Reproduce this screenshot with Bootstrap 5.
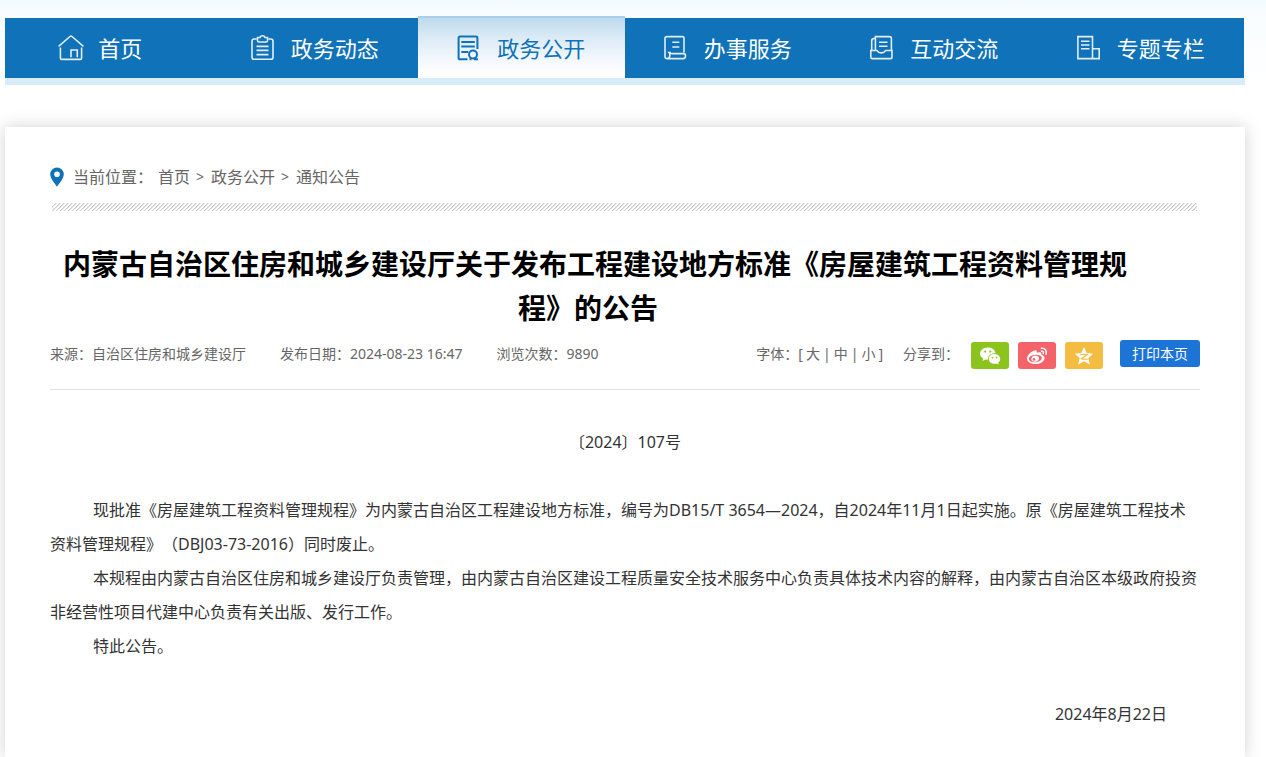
<!DOCTYPE html>
<html lang="zh-CN">
<head>
<meta charset="utf-8">
<meta name="viewport" content="width=device-width, initial-scale=1">
<title>通知公告</title>
<link href="https://cdn.jsdelivr.net/npm/bootstrap@5.3.0/dist/css/bootstrap.min.css" rel="stylesheet">
<style>
body{font-family:"Noto Sans","Noto Sans CJK SC",sans-serif;font-size:16px;color:#333;text-spacing-trim:space-all;background:#fff linear-gradient(#f4fbff,#f9fdff 20px,#fff 85px) no-repeat 0 0/100% 85px}
.page-wrap{padding:18px 21px 0 5px;overflow:hidden}
.main-nav{border-bottom:7px solid #d8ebf9}
.main-nav ul{background:#1072b8;margin-right:1px}
.main-nav a{height:60px;color:#fff;font-size:22px;line-height:32px;gap:14px}
.main-nav a.first-tab{padding-right:16px}
.main-nav a.active{margin-top:-2px;height:62px;padding-top:2px;color:#1072b8;background:linear-gradient(#a8cfec 0,#a8cfec 2px,#bedaed 2px,#dcebf6 22px,#f5f9fd 46px,#fff 58px)}
.main-nav svg{width:26px;height:26px;fill:none;stroke:currentColor;stroke-width:1.6;opacity:.88}
.main-nav a.active svg{stroke-width:2;opacity:1}
.sheet{margin-top:42px;background:#fff;box-shadow:0 0 16px rgba(0,0,0,.18);padding:38px 45px 24px}
.crumbs{line-height:24px;color:#666}
.crumbs a,.meta a{color:inherit;text-decoration:none}
.crumbs svg{margin-right:9px}
.crumbs .sep{font-size:14px;margin:0 7px 0 6px}
.crumbs .here{margin-right:5px}
.hatch{height:8px;margin:14px 3px 0 2px;background:linear-gradient(135deg,#ccc 12%,transparent 13%,transparent 49%,#ccc 50%,#ccc 62%,transparent 63%) 0 0/4px 4px}
h1{font-size:28px;line-height:44px;font-weight:700;color:#000;text-align:center;text-indent:14px;margin:31px 69px 0 -5px}
.meta{font-size:14px;line-height:28px;color:#666;padding:10px 0 20px;border-bottom:1px solid #e2e2e2}
.stats{gap:34px}
.sizes{margin-right:20px}
.sizes a{margin:0 3px}
.share-set{gap:9px;margin-left:12px}
.share{width:38px;height:27px;border:0;border-radius:3px;padding:0;margin-top:2px}
.share svg{width:24px;height:22px;fill:#fff;display:block;margin:auto}
.wx{background:#8bc41c}.wb{background:#f5636a}.qz{background:#f4bc41}
.print-btn{width:80px;height:27px;border:0;border-radius:3px;background:#1b74d6;color:#fff;font-size:14px;line-height:27px;padding:0;margin-left:17px}
.article{line-height:34px;padding-top:35px}
.article p{margin:0}
.article .para{text-indent:43px}
.article .date{padding-right:33px}
</style>
</head>
<body>
<div class="page-wrap d-flex flex-column min-vh-100">
<nav class="main-nav">
<ul class="list-unstyled row g-0 row-cols-6 mb-0">
<li class="col"><a href="#" class="first-tab d-flex align-items-center justify-content-center text-decoration-none"><svg viewBox="0 0 26 26" aria-hidden="true"><path d="M.6 11.4 12 1.5q1-.8 2 0l11.4 9.9M2.4 12.4V23q0 1.4 1.4 1.4h18.4q1.4 0 1.4-1.4V12.4M13 22.200V15h6.300v7.200"/></svg>首页</a></li>
<li class="col"><a href="#" class="d-flex align-items-center justify-content-center text-decoration-none"><svg viewBox="0 0 26 26" aria-hidden="true"><path d="M5.500 4H3.200Q1 4 1 6.200v16Q1 24.300 3.200 24.300h16.600q2.200 0 2.200-2.100v-16Q22 4 19.800 4h-2.300M6.500 2.500H9q.5-1.700 2.500-1.700T14 2.500h2.500v3q0 1.500-1.500 1.500H8q-1.500 0-1.500-1.500zM5.500 11.400h12M5.500 15.400h12M5.500 19.600h12"/></svg>政务动态</a></li>
<li class="col"><a href="#" aria-current="page" class="active d-flex align-items-center justify-content-center text-decoration-none"><svg viewBox="0 0 26 26" aria-hidden="true"><path d="M10.500 24.300H3q-1.400 0-1.400-1.400V3Q1.600 1.600 3 1.600h16q1.400 0 1.400 1.400v11M4.300 7h13.500M4.300 11.400h13.500M4.300 17h7"/><circle cx="16" cy="19.500" r="4"/><path d="M12.500 24.300h2M18 22.800v1.500h3"/></svg>政务公开</a></li>
<li class="col"><a href="#" class="d-flex align-items-center justify-content-center text-decoration-none"><svg viewBox="0 0 26 26" aria-hidden="true"><path d="M20 17.500V3q0-1.400-1.400-1.400H3Q1 1.600 1 3.500v18q0 2.100 2.200 2.100h16q2.300 0 2.300-2.600 0-2.400-1.800-2.400h-12q-1.600 0-1.600-1H5q1.200 1.400.8 3.500-.4 2.400-2.600 2.500M8.300 7.200h7M8.300 12h7"/></svg>办事服务</a></li>
<li class="col"><a href="#" class="d-flex align-items-center justify-content-center text-decoration-none"><svg viewBox="0 0 26 26" aria-hidden="true"><path d="M5.400 15.500V1.600h14q2 0 2 2v12M5.400 3.500H4Q1.700 3.500 1.700 6v9.500M.8 15.500h6q.3 0 .5.400 1 2 4 2t4-2q.2-.4.500-.4h6.200v6.700q0 1.400-1.400 1.400H2.200Q.8 23.600.8 22.200zM9 7.200h8.500M9 11.200h8.500"/></svg>互动交流</a></li>
<li class="col"><a href="#" class="d-flex align-items-center justify-content-center text-decoration-none"><svg viewBox="0 0 26 26" aria-hidden="true"><path d="M15.500 23.600H.9V1.600h14.600zM15.500 13.800h6.700v9.800h-6.700M4 6.200h8.500M4 10h8.500M4 13.800h8.500"/></svg>专题专栏</a></li>
</ul>
</nav>
<main class="sheet flex-grow-1">
<nav class="crumbs d-flex align-items-center" aria-label="当前位置"><svg width="14" height="20" viewBox="0 0 14 20" aria-hidden="true"><path fill="#1072b8" fill-rule="evenodd" d="M7 .5a6.800 6.800 0 0 1 6.800 6.800C13.800 11.500 9.500 16 7 19.800 4.500 16 .2 11.500.2 7.300A6.800 6.800 0 0 1 7 .5zm0 4a2.800 2.800 0 1 0 0 5.600 2.800 2.800 0 0 0 0-5.600z"/></svg><span class="here">当前位置：</span><a href="#">首页</a><span class="sep">&gt;</span><a href="#">政务公开</a><span class="sep">&gt;</span><a href="#">通知公告</a></nav>
<div class="hatch"></div>
<h1>内蒙古自治区住房和城乡建设厅关于发布工程建设地方标准《房屋建筑工程资料管理规程》的公告</h1>
<div class="meta d-flex justify-content-between">
<div class="stats d-flex"><span>来源：自治区住房和城乡建设厅</span><span>发布日期：2024-08-23 16:47</span><span>浏览次数：9890</span></div>
<div class="d-flex"><span class="sizes">字体：[<a href="#">大</a>|<a href="#">中</a>|<a href="#">小</a>]</span><span>分享到：</span>
<div class="d-flex share-set">
<button type="button" class="share wx" aria-label="微信"><svg viewBox="0 0 24 22"><path fill-rule="evenodd" d="M10 2.500c4.200 0 7.300 2.600 7.500 5.700-4.300-.3-7.500 2.300-7.500 5.600v.9l-2.500-.3-3 1.700.7-2.700C3.300 12.300 2 10.700 2 8.700 2 5.300 5.400 2.500 10 2.500zM7.200 5.500a1.100 1.100 0 1 0 0 2.200 1.100 1.100 0 0 0 0-2.200zm5 0a1.100 1.100 0 1 0 0 2.200 1.100 1.100 0 0 0 0-2.200z"/><path fill-rule="evenodd" d="M16.500 9c3.300 0 5.700 2.200 5.700 4.900 0 1.600-.8 2.800-2 3.700l.5 2-2.200-1.100c-4.200 1-7.700-1.300-7.700-4.600C10.800 11.200 13.200 9 16.500 9zm-2 2.700a.9.900 0 1 0 0 1.800.9.900 0 0 0 0-1.800zm4 0a.9.900 0 1 0 0 1.800.9.900 0 0 0 0-1.800z"/></svg></button>
<button type="button" class="share wb" aria-label="微博"><svg viewBox="0 0 24 22"><path fill-rule="evenodd" d="M10.200 5.200c1.400-.3 2 .8 1.500 2.500 2.800-1.100 5.400-.7 4.800 2 1.800.5 3.200 1.600 3 3.500-.4 3.600-4.500 5.800-9.200 5.800-4.600 0-8.300-2.200-8.300-5.500 0-3.500 4.900-7.700 8.200-8.300zM10 9.800c-3.600.3-6.200 2.200-6 4.400.2 2.100 3.200 3.300 6.600 3 3.700-.3 6.400-2.400 6.200-4.500-.3-2.200-3.300-3.200-6.800-2.900z"/><path fill-rule="evenodd" d="M10.400 10.600c2.500 0 4 1.300 3.600 3.100-.4 1.900-2.400 3.100-4.400 3-2.300-.1-3.600-1.500-3.200-3.200.4-1.800 2.100-2.900 4-2.900zM9 13a1.400 1.400 0 1 0 0 2.800A1.400 1.400 0 0 0 9 13z"/><path fill="none" stroke="#fff" stroke-width="1.500" stroke-linecap="round" d="M16.300 3.200c3.500-.5 5.900 2.500 4.700 6M16.500 6.200c1.500-.2 2.300 1 1.800 2.400"/></svg></button>
<button type="button" class="share qz" aria-label="QQ空间"><svg viewBox="0 0 24 22"><path d="m12 2 2.700 6 6.500.7-4.900 4.300 1.500 6.500-5.800-3.300-5.800 3.300L7.700 13 2.800 8.700l6.500-.7z"/><path fill="none" stroke="#f4bc41" stroke-width="1.200" d="M8.200 9.600q3.500-.6 7 0L9.500 13.800q3.200.8 6.600.2"/></svg></button>
</div>
<button type="button" class="print-btn">打印本页</button></div>
</div>
<article class="article">
<p class="text-center">〔2024〕107号</p>
<p>&nbsp;</p>
<p class="para">现批准《房屋建筑工程资料管理规程》为内蒙古自治区工程建设地方标准，编号为DB15/T 3654—2024，自2024年11月1日起实施。原《房屋建筑工程技术资料管理规程》（DBJ03-73-2016）同时废止。</p>
<p class="para">本规程由内蒙古自治区住房和城乡建设厅负责管理，由内蒙古自治区建设工程质量安全技术服务中心负责具体技术内容的解释，由内蒙古自治区本级政府投资非经营性项目代建中心负责有关出版、发行工作。</p>
<p class="para">特此公告。</p>
<p>&nbsp;</p>
<p class="date text-end">2024年8月22日</p>
</article>
</main>
</div>
<script src="https://cdn.jsdelivr.net/npm/bootstrap@5.3.0/dist/js/bootstrap.bundle.min.js"></script>
</body>
</html>
